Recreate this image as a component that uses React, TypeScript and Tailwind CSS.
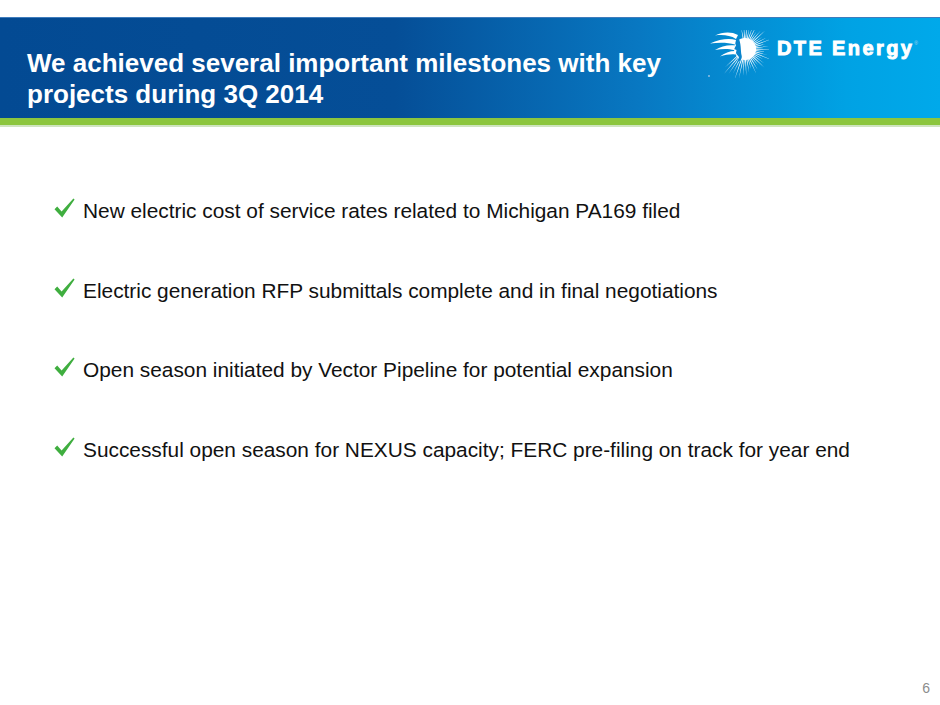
import React from 'react';

const milestones = [
  'New electric cost of service rates related to Michigan PA169 filed',
  'Electric generation RFP submittals complete and in final negotiations',
  'Open season initiated by Vector Pipeline for potential expansion',
  'Successful open season for NEXUS capacity; FERC pre-filing on track for year end',
];

// sun rays around the logo disc, angles in degrees (0 = right)
const rays = Array.from({ length: 34 }, (_, i) => -100 + i * 7.2);

const CheckMark = () => (
  <svg width="21" height="20" viewBox="0 0 21 20" className="shrink-0">
    <path d="M0.5 11.2 L3.2 8.6 L7.6 13.4 L19.4 0.6 L20.6 1.6 L8.2 19.6 Z" fill="#3fae3f" />
  </svg>
);

const SunLogo = () => {
  const cx = 38;
  const cy = 19;

  return (
    <svg width="62" height="48" viewBox="0 0 62 48" className="shrink-0">
      {rays.map((a, i) => {
        const r = (a * Math.PI) / 180;
        const len = 21 + (i % 3) * 3 + (a > 90 ? 6 : 0);
        const w = 0.06;
        const x1 = cx + Math.cos(r - w) * 9;
        const y1 = cy + Math.sin(r - w) * 9;
        const x2 = cx + Math.cos(r + w) * 9;
        const y2 = cy + Math.sin(r + w) * 9;
        const tx = cx + Math.cos(r) * len;
        const ty = cy + Math.sin(r) * len;
        return (
          <polygon
            key={a}
            points={`${x1},${y1} ${tx},${ty} ${x2},${y2}`}
            fill="white"
          />
        );
      })}
      <circle cx={cx} cy={cy} r="11" fill="white" />
      {/* profile of the face */}
      <path
        d="M31 7 C28 10 27.5 13 29 15.5 L27 19 L29.5 20 L29 23 C29.5 25 31.5 25.5 32 27.5 L30 32 C34 31 35.5 28 34.5 25 C33.5 21 34.5 13 31 7 Z"
        fill="#0a84cc"
      />
      {/* hair */}
      <path d="M31 5 C24 1 15 2 8 5.5 C15 4.5 23 5 29 9 Z" fill="white" />
      <path d="M29 10 C22 8 13 9 3 13.5 C12 12.5 21 12.5 28 14.5 Z" fill="white" />
      <path d="M28 15.5 C21 14.5 14 16.5 8 20 C15 18.5 22 18.5 27 20 Z" fill="white" />
      <path d="M28 21 C23 21 17 23 13 26.5 C18 25 24 24 28 24.5 Z" fill="white" />
      <circle cx="2" cy="46" r="0.9" fill="#9fc4e4" />
    </svg>
  );
};

export default function App() {
  return (
    <div
      className="w-[940px] h-[705px] bg-white flex flex-col overflow-hidden"
      style={{ fontFamily: '"Liberation Sans", Arial, sans-serif' }}
    >
      <div className="h-[17px] shrink-0" />

      <header className="h-[101px] shrink-0 flex justify-between border-t border-[#3f7cbc] bg-[linear-gradient(to_right,#034a93_0%,#054e97_42%,#0878c2_68%,#00a2e4_90%,#00a9ea_100%)]">
        <h1 className="pl-[27px] pt-[30px] text-white font-bold text-[26px] leading-[31px]">
          We achieved several important milestones with key
          <br />
          projects during 3Q 2014
        </h1>

        <div className="flex items-start pt-[12px] pr-[22px]">
          <SunLogo />
          <span className="ml-[8px] mt-[8px] text-white font-bold text-[20px] leading-[20px] tracking-[2.4px] whitespace-nowrap [-webkit-text-stroke:0.9px_white]">
            DTE Energy
          </span>
          <span className="mt-[11px] text-[5px] leading-[5px] text-[#a9d4f0]">®</span>
        </div>
      </header>

      <div className="h-[7px] shrink-0 bg-[#8cc63e]" />
      <div className="h-[2px] shrink-0 bg-[#cfe4c0]" />

      <main className="flex-1 flex flex-col gap-[54.7px] pt-[71px] pl-[54px]">
        {milestones.map((text) => (
          <div key={text} className="flex items-end gap-[8px]">
            <div className="mb-[5px]">
              <CheckMark />
            </div>
            <p className="text-[20.85px] leading-[24px] text-[#111111] whitespace-nowrap">{text}</p>
          </div>
        ))}
      </main>

      <footer className="flex justify-end pr-[10px] pb-[9px]">
        <span className="text-[14px] leading-[16px] text-[#8c8c8c]">6</span>
      </footer>
    </div>
  );
}
